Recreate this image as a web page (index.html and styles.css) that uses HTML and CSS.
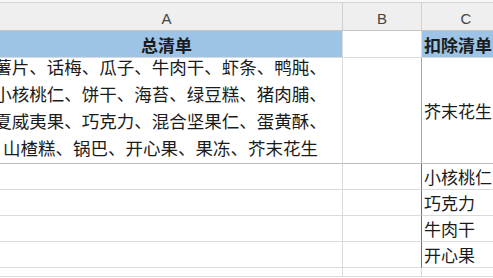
FILE: index.html
```html
<!DOCTYPE html>
<html lang="zh">
<head>
<meta charset="utf-8">
<link rel="stylesheet" href="styles.css">
</head>
<body>
<div class="topstrip"></div>
<div class="sheet">
  <div class="colhead">A</div>
  <div class="colhead">B</div>
  <div class="colhead last">C</div>

  <div class="cell blue bold center">总清单</div>
  <div class="cell"></div>
  <div class="cell blue bold left last">扣除清单</div>

  <div class="cell big">
    <div class="lines">
      <div>薯片、话梅、瓜子、牛肉干、虾条、鸭肫、</div>
      <div>小核桃仁、饼干、海苔、绿豆糕、猪肉脯、</div>
      <div>夏威夷果、巧克力、混合坚果仁、蛋黄酥、</div>
      <div>山楂糕、锅巴、开心果、果冻、芥末花生</div>
    </div>
  </div>
  <div class="cell bmid"></div>
  <div class="cell left last big2">芥末花生</div>

  <div class="cell"></div>
  <div class="cell bdark"></div>
  <div class="cell left last">小核桃仁</div>

  <div class="cell"></div>
  <div class="cell bdark"></div>
  <div class="cell left last">巧克力</div>

  <div class="cell"></div>
  <div class="cell bdark"></div>
  <div class="cell left last">牛肉干</div>

  <div class="cell"></div>
  <div class="cell bdark"></div>
  <div class="cell left last">开心果</div>

  <div class="cell"></div>
  <div class="cell"></div>
  <div class="cell last"></div>
</div>
</body>
</html>
```

FILE: styles.css
```css
* { box-sizing: border-box; }
html, body {
  margin: 0;
  padding: 0;
  background: #ffffff;
  overflow: hidden;
  width: 493px;
  height: 278px;
}
body {
  font-family: "Noto Sans CJK SC", "Noto Sans", sans-serif;
  color: #1b1b1b;
}
.topstrip {
  height: 3px;
  background: #f8f8f8;
  border-bottom: 1px solid #d4d4d4;
}
.sheet {
  display: grid;
  margin-left: -9px;
  width: 520px;
  grid-template-columns: 352px 79px 89px;
  grid-template-rows: 28px 27px 106px 26px 26px 26px 26px 9px;
}
.colhead {
  background: #efefef;
  border-right: 1px solid #d0d0d0;
  border-bottom: 1px solid #c4c4c4;
  font-family: "Liberation Sans", Arial, sans-serif;
  font-size: 15px;
  color: #444444;
  display: flex;
  align-items: center;
  justify-content: center;
  padding-top: 4px;
}
.cell {
  border-right: 1px solid #dadada;
  border-bottom: 1px solid #dadada;
  font-size: 17px;
  display: flex;
  align-items: center;
  overflow: hidden;
  white-space: nowrap;
}
.blue { background: #9dc3e6; }
.bold { font-weight: 700; }
.center { justify-content: center; }
.left { padding-left: 2px; }
.big {
  border-bottom: 1px solid #bdbdbd;
  justify-content: center;
}
.lines {
  text-align: center;
  line-height: 27px;
  font-size: 17.5px;
  margin-right: 12px;
  margin-top: -7px;
}
.bmid { border-right-color: #a8a8a8; border-bottom-color: #bdbdbd; }
.bdark { border-right-color: #707070; }
.big2 { border-bottom-color: #bdbdbd; }
```
